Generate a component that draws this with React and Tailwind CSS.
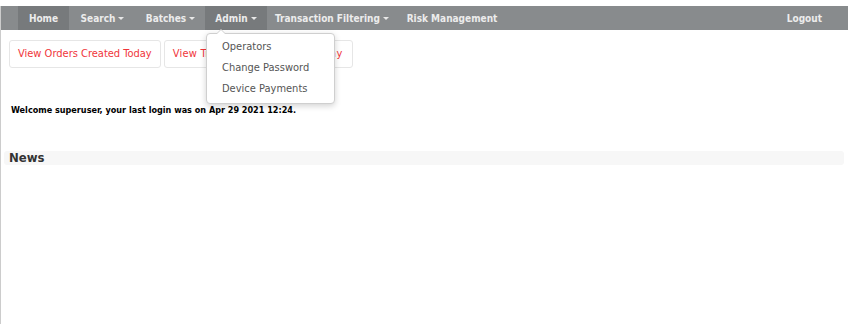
import React from 'react';

// Admin portal home: grey nav bar with the Admin menu open, quick links,
// welcome line and an empty News section.
const FONT = { fontFamily: '"DejaVu Sans Condensed", "DejaVu Sans", Verdana, sans-serif' };

const navItems = [
  { label: 'Home', w: 'w-[51px]', active: true },
  { label: 'Search', w: 'w-[67px]', caret: true },
  { label: 'Batches', w: 'w-[69px]', caret: true },
  { label: 'Admin', w: 'w-[62px]', caret: true, open: true },
  { label: 'Transaction Filtering', w: 'w-[130px]', caret: true },
  { label: 'Risk Management', w: 'w-[110px]' },
];

const adminMenu = ['Operators', 'Change Password', 'Device Payments'];

function Caret() {
  return (
    <span className="ml-[3px] inline-block h-0 w-0 border-x-[3px] border-t-[3px] border-x-transparent border-t-[#e8e8e8]" />
  );
}

function AdminMenu() {
  return (
    <div className="absolute left-px top-[27px] z-20 w-[129px] rounded-[4px] border border-[#cfcfcf] bg-white py-[3px] text-[11px] font-normal text-[#555] shadow-[0_2px_6px_rgba(0,0,0,0.18)]">
      <span className="absolute -top-[5px] left-[9px] h-0 w-0 border-x-[5px] border-b-[5px] border-x-transparent border-b-[#cfcfcf]" />
      <span className="absolute -top-[4px] left-[10px] h-0 w-0 border-x-[4px] border-b-[4px] border-x-transparent border-b-white" />
      {adminMenu.map(function (item) {
        return (
          <div key={item} className="flex h-[21px] items-center pl-[15px]">
            {item}
          </div>
        );
      })}
    </div>
  );
}

function NavBar() {
  return (
    <nav className="mt-[6px] flex h-[24px] items-stretch bg-[#888b8d] pl-[17px] pr-[26px]">
      {navItems.map(function (item) {
        return (
          <div
            key={item.label}
            className={
              'relative flex shrink-0 items-center justify-center whitespace-nowrap text-[10px] font-bold text-[#ececec] ' +
              item.w +
              (item.active || item.open ? ' bg-[#777a7c]' : '')
            }
          >
            {item.label}
            {item.caret && <Caret />}
            {item.open && <AdminMenu />}
          </div>
        );
      })}
      <div className="ml-auto flex items-center text-[10px] font-bold text-[#ececec]">Logout</div>
    </nav>
  );
}

function QuickLink({ children, wide }) {
  return (
    <a
      className={
        'flex h-[28px] items-center whitespace-nowrap rounded-[3px] border border-[#e6e6e6] px-[8px] text-[11px] text-[#f0353a]' +
        (wide ? ' w-[189px] tracking-[0.25px]' : '')
      }
    >
      {children}
    </a>
  );
}

export default function App() {
  return (
    <div className="h-[324px] w-[848px] overflow-hidden bg-white" style={FONT}>
      <div className="h-[324px] border-b-2 border-l border-b-[#d8d8d8] border-l-[#cccccc]">
        <NavBar />
        <div className="mt-[10px] flex gap-[3px] pl-[8px]">
          <QuickLink>View Orders Created Today</QuickLink>
          <QuickLink wide>View Transactions Created Today</QuickLink>
        </div>
        <p className="mt-[36px] pl-[10px] text-[9px] font-bold leading-[12px] text-black">
          Welcome superuser, your last login was on Apr 29 2021 12:24.
        </p>
        <div className="ml-[3px] mr-[4px] mt-[35px] flex h-[14px] items-center rounded-[3px] bg-[#f7f7f7] pl-[5px]">
          <h2 className="text-[13px] font-bold text-[#333]">News</h2>
        </div>
      </div>
    </div>
  );
}
